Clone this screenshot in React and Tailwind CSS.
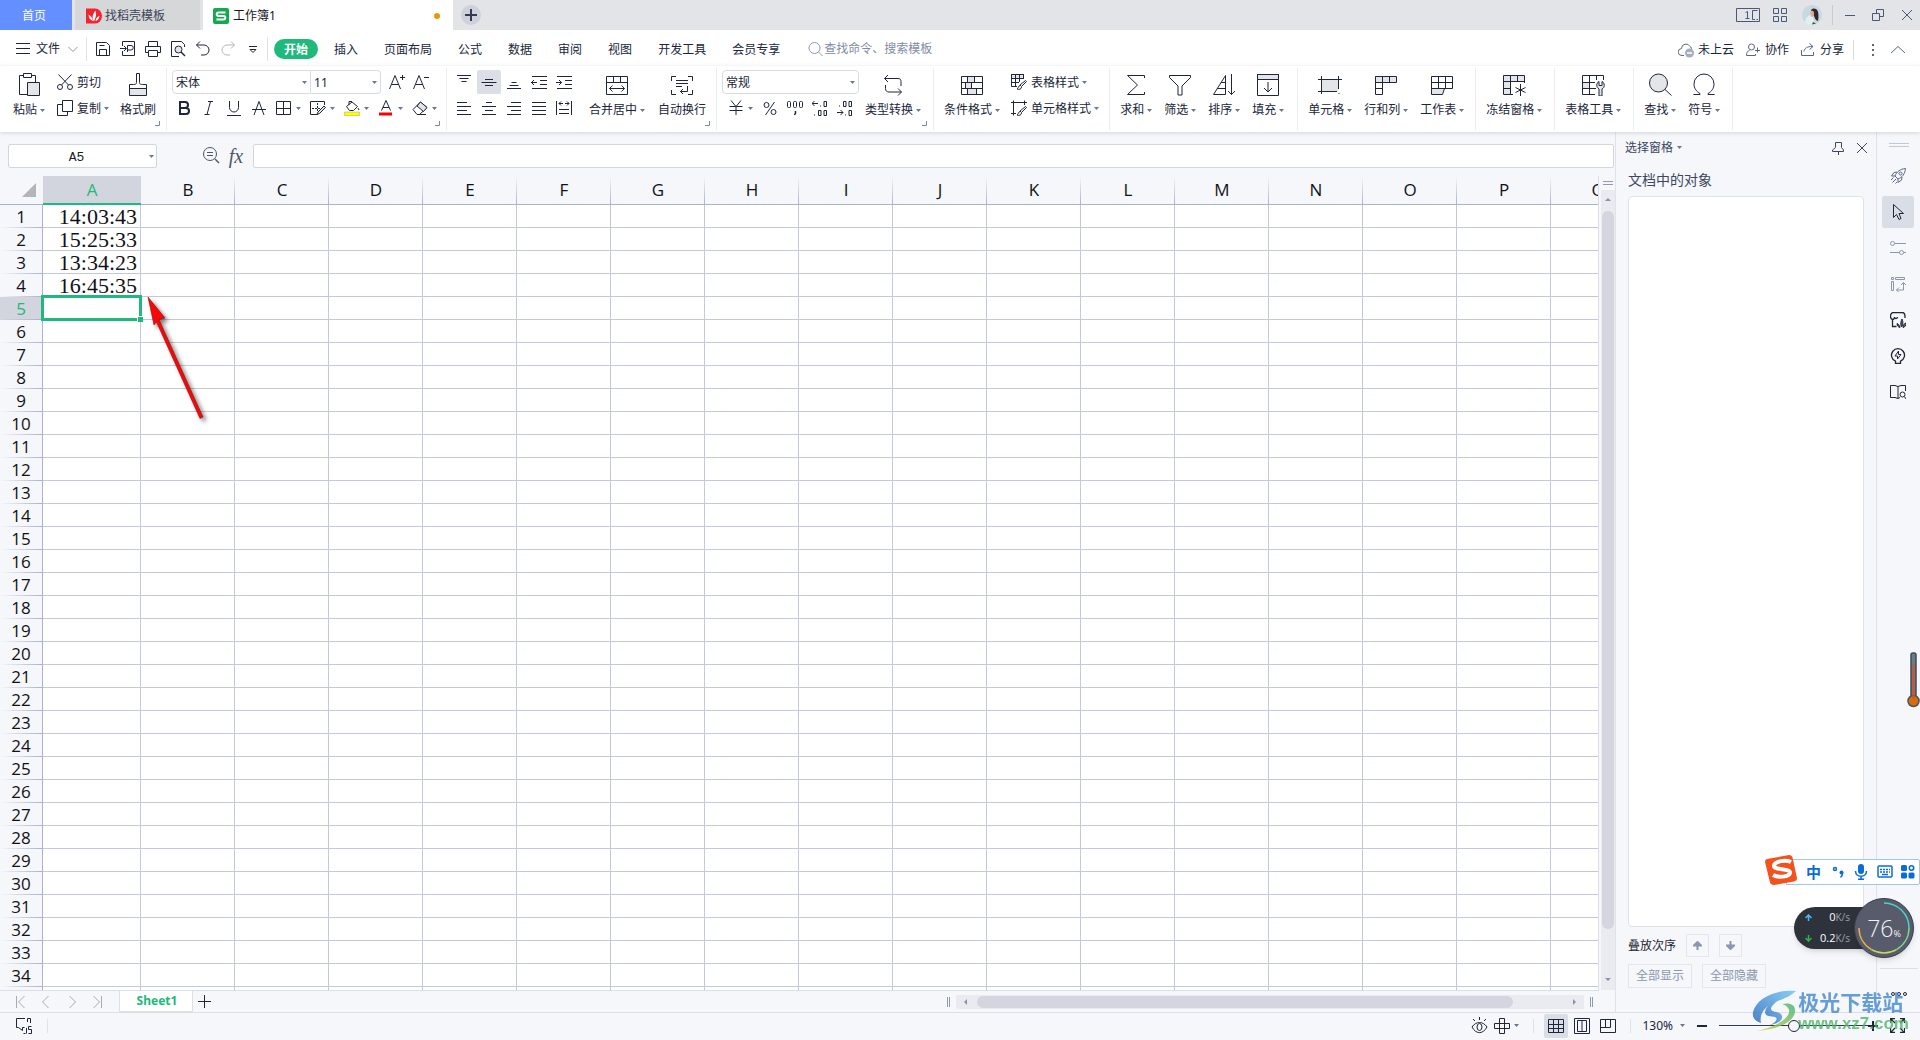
import React, { useState } from "react";

const COLUMNS = ["A", "B", "C", "D", "E", "F", "G", "H", "I", "J", "K", "L", "M", "N", "O", "P", "Q"];
const ROWS = Array.from({ length: 34 }, (_, i) => i + 1);
const TIMES = { 1: "14:03:43", 2: "15:25:33", 3: "13:34:23", 4: "16:45:35" };
const MENUS = ["开始", "插入", "页面布局", "公式", "数据", "审阅", "视图", "开发工具", "会员专享"];

const Icon = ({ size = 16, className = "", children }) => (
    <svg width={size} height={size} viewBox={`0 0 ${size} ${size}`} fill="none" stroke="currentColor" strokeWidth="1" className={`shrink-0 ${className}`} aria-hidden="true">
        {children}
    </svg>
);

const Caret = ({ className = "" }) => (
    <svg width="5" height="3" viewBox="0 0 5 3" className={`shrink-0 text-[#6b7690] ${className}`} aria-hidden="true">
        <path d="M0 0h5L2.5 3z" fill="currentColor" />
    </svg>
);

const Group = ({ className = "", launcher, children }) => (
    <div className={`relative my-0.5 flex items-start border-r border-[#ebedf0] pt-0.5 ${className}`}>
        {children}
        {launcher && (
            <svg width="5" height="5" viewBox="0 0 5 5" className="absolute bottom-1 right-1.5 text-[#7d889e]" aria-hidden="true">
                <path d="M4.5 0v4.5H0" fill="none" stroke="currentColor" />
            </svg>
        )}
    </div>
);

// large ribbon button: picture on top, caption below
const BigButton = ({ label, caret = true, children }) => (
    <button className="mt-0.5 flex shrink-0 flex-col items-center gap-1.5">
        <Icon size={24}>{children}</Icon>
        <span className="flex items-center gap-[3px] whitespace-nowrap leading-4">
            {label}
            {caret && <Caret />}
        </span>
    </button>
);

const RowButton = ({ label, caret, children }) => (
    <button className="flex h-6 items-center gap-1 whitespace-nowrap leading-4">
        <Icon>{children}</Icon>
        <span className="flex items-center gap-[3px] pt-px">
            {label}
            {caret && <Caret />}
        </span>
    </button>
);

const Tool = ({ title, active, children }) => (
    <button aria-label={title} className={`flex size-6 items-center justify-center rounded-xs ${active ? "bg-[#dce0e6]" : ""}`}>
        <Icon>{children}</Icon>
    </button>
);

const CaretTool = ({ title, children }) => (
    <button aria-label={title} className="flex h-6 items-center gap-1">
        <Icon>{children}</Icon>
        <Caret />
    </button>
);

const Select = ({ label, value, className }) => (
    <div className={`relative h-6 border border-[#d8dbe1] bg-white ${className}`}>
        <select aria-label={label} defaultValue={value} className="h-full w-full appearance-none pl-[3px] pr-4 pt-px leading-4 outline-none">
            <option>{value}</option>
        </select>
        <Caret className="pointer-events-none absolute right-[3px] top-[10px]" />
    </div>
);

const TitleBar = () => (
    <header className="flex h-[30px] shrink-0 items-center bg-[#e2e4e8] text-xs">
        <button className="h-full w-[72px] bg-[#648fff] pr-1 pt-px text-white">首页</button>
        <button className="ml-[3px] flex h-full w-[125px] items-center gap-[3px] bg-[#d6d7d9] pl-[11px] pt-px text-[#3c4354]">
            <Icon>
                <path d="M0 .5h9a7 7.500 0 0 1 0 15H0z" fill="#f5222f" stroke="none" />
                <path d="M8 13.500C5 9 7.500 5 9.500 2.500c1 3.500.5 7-1.500 11zM7 13C3.500 11.500 2.500 9 2.500 6.500 5 8 6.500 10 7 13zM9.500 13c.5-3 2-4.500 4-5-.3 2.500-1.500 4.300-4 5z" fill="#fff" stroke="none" />
            </Icon>
            找稻壳模板
        </button>
        <div className="ml-[3px] flex h-full w-[250px] items-center gap-1 bg-white pl-[10px] pt-px text-[#16181d]">
            <Icon>
                <rect width="16" height="16" rx="2" fill="#12aa4c" stroke="none" />
                <path d="M12.500 4.500h-7a1.700 1.700 0 0 0 0 3.500h5a1.700 1.700 0 0 1 0 3.500h-7" stroke="#fff" strokeWidth="2" />
            </Icon>
            <span className="flex-1">工作簿1</span>
            <span className="mr-[13px] size-1.5 rounded-full bg-[#e39a07]" />
        </div>
        <button aria-label="新建" className="ml-2 flex size-5 items-center justify-center rounded-full bg-[#ced1d9] text-[#333b50]">
            <Icon size={12}>
                <path d="M6 0v12M0 6h12" strokeWidth="2" />
            </Icon>
        </button>
        <div className="ml-auto flex items-center pr-2 text-[#4a5878]">
            <button aria-label="多窗口">
                <svg width="24" height="14" viewBox="0 0 24 14" fill="none" stroke="currentColor">
                    <path d="M.5.500h23v13H.500zM21.500 2.500h-5v9h2.500M20.500 11.500h1.500M9.500 4.500l2-1V10M9.500 10.500h4" />
                </svg>
            </button>
            <button aria-label="应用" className="ml-[13px]">
                <Icon size={14}>
                    <path d="M.5.500h5v5h-5zM8.500.500h5v5h-5zM.5 8.500h5v5h-5zM8.500 8.500h5v5h-5z" />
                </Icon>
            </button>
            <button aria-label="账号" className="ml-[15px]">
                <Icon size={20}>
                    <circle cx="10" cy="10" r="10" fill="#c6d9df" stroke="none" />
                    <path d="M3 17c1-5 3-7 7-7l3 9c-4 1.500-8 .5-10-2z" fill="#dff0f3" stroke="none" />
                    <path d="M9 5c1-1.500 3-2 5-1 2.500 1.500 2.500 5 2.500 8.500L16 16c-2-.5-3-2-3.500-4z" fill="#32262c" stroke="none" />
                    <path d="M8.500 6.500c1.500-1.500 3-1 3.500 1s-.5 4-1.500 4.500S8 10 8.500 6.500z" fill="#e2a898" stroke="none" />
                    <path d="M11 17l3 1.500-4 1z" fill="#4b4248" stroke="none" />
                </Icon>
            </button>
            <span className="ml-[10px] h-5 w-px bg-[#c6cad1]" />
            <button aria-label="最小化" className="ml-3">
                <Icon size={10}><path d="M0 5.500h10" /></Icon>
            </button>
            <button aria-label="还原" className="ml-[17px]">
                <Icon size={12}><path d="M.5 4.500h7v7h-7zM4.500 4.500v-4h7v7h-4" /></Icon>
            </button>
            <button aria-label="关闭" className="ml-[18px]">
                <Icon size={10}><path d="M0 0l10 10M10 0L0 10" /></Icon>
            </button>
        </div>
    </header>
);

const MenuBar = ({ menu, setMenu }) => (
    <div className="flex h-9 shrink-0 items-center bg-white pl-4 pt-0.5">
        <button className="flex items-center gap-1.5">
            <Icon size={14}><path d="M0 1.500h14M0 6.500h14M0 11.500h14" /></Icon>
            文件
            <Icon size={10} className="ml-0.5 text-[#8e97a8]"><path d="M.5 3L5 7.500 9.500 3" /></Icon>
        </button>
        <span className="ml-2 h-6 w-px bg-[#dfe1e6]" />
        <div className="flex items-center gap-[9px] pl-2">
            <button aria-label="保存">
                <Icon><path d="M1.500 1.500h10l3 3v10h-13zM4.500 14.500v-6h7v6M4.500 4.500h5" /></Icon>
            </button>
            <button aria-label="输出为PDF">
                <Icon><path d="M2.500 5V.500h12v14h-12V10M0 7.500h6M4 5l2.500 2.500L4 10M7.500 11V4.500H11a2 2 0 0 1 0 4.500H7.500" /></Icon>
            </button>
            <button aria-label="打印">
                <Icon><path d="M3.500 5V.500h9V5M3.500 11.500h-3V5.500h15v6h-3M3.500 9.500h9v6h-9z" /></Icon>
            </button>
            <button aria-label="打印预览">
                <Icon>
                    <path d="M14.500 6V3.500l-3-3h-10v15H9" />
                    <circle cx="8.500" cy="8.500" r="3.500" fill="#e4e5e8" />
                    <path d="M11 11l4 4" strokeWidth="1.500" />
                </Icon>
            </button>
            <button aria-label="撤销">
                <Icon><path d="M5 .500L1.500 4 5 7.500M1.500 4H9a5 5 0 0 1 0 10H6" /></Icon>
            </button>
            <button aria-label="恢复" className="text-[#b3b6bc]">
                <Icon><path d="M11 .500L14.500 4 11 7.500M14.500 4H7a5 5 0 0 0 0 10h3" /></Icon>
            </button>
            <button aria-label="自定义快速访问工具栏">
                <Icon><path d="M4 5.500h8M5 8.500l3 3 3-3z" /></Icon>
            </button>
        </div>
        <span className="ml-1.5 h-6 w-px bg-[#dfe1e6]" />
        <nav className="ml-1.5 flex gap-1.5">
            {MENUS.map((item) => (
                <button
                    key={item}
                    onClick={() => setMenu(item)}
                    className={`h-5 whitespace-nowrap rounded-full px-[10px] pt-px leading-5 ${menu === item ? "bg-[#20b97c] font-bold text-white" : ""}`}
                >
                    {item}
                </button>
            ))}
        </nav>
        <label className="ml-[18px] flex items-center text-[#8f9bb3]">
            <Icon>
                <circle cx="6.500" cy="7" r="5.500" />
                <path d="M10.500 11l4 4" />
            </Icon>
            <input aria-label="查找命令" placeholder="查找命令、搜索模板" className="w-32 outline-none placeholder:text-[#7f8ba5]" />
        </label>
        <div className="ml-auto flex items-center pt-px">
            <button className="flex items-center gap-1">
                <Icon className="text-[#5b6780]">
                    <path d="M6 13.500H4a3.500 3.500 0 0 1-.5-7A4.500 4.500 0 0 1 12 4.500c1 .5 1.500 1.500 1.500 2.500" />
                    <circle cx="11.500" cy="11" r="4.500" fill="#a5aebf" stroke="none" />
                    <path d="M9 11h5" stroke="#fff" strokeWidth="1.500" />
                </Icon>
                未上云
            </button>
            <button className="ml-3 flex items-center gap-[5px]">
                <Icon size={14} className="text-[#5b6780]">
                    <circle cx="5.500" cy="4" r="3" />
                    <path d="M3.500 7.500C1.500 8 .5 9.500.5 12.500h9V11M11.500 4.500v5M9 7.500h5" />
                </Icon>
                协作
            </button>
            <button className="ml-[11px] flex items-center gap-1">
                <Icon className="text-[#5b6780]">
                    <path d="M1.500 8v5.500h12V10M4 9.500C4.500 6 7 4.500 12.500 4.500M9.500 1.500l3.500 3-3.500 3" />
                </Icon>
                分享
            </button>
            <span className="ml-[9px] h-5 w-px bg-[#d9dce2]" />
            <button aria-label="更多" className="ml-[13px] text-[#5b6780]">
                <Icon size={12}><path d="M6 0v2M6 5v2M6 10v2" strokeWidth="2" /></Icon>
            </button>
            <button aria-label="折叠功能区" className="ml-[11px] mr-[14px] text-[#5b6780]">
                <Icon><path d="M1 11l7-6.500 7 6.500" /></Icon>
            </button>
        </div>
    </div>
);

const Ribbon = () => (
    <div className="relative z-10 flex h-[66px] shrink-0 bg-white shadow-[0_1px_4px_rgba(60,70,90,0.2)]">
        <Group launcher className="pl-[13px] pr-[10px]">
            <BigButton label="粘贴">
                <path d="M10 22.500H2.500v-19h4M14.500 3.500h4V10M6.500 1.500h8v4h-8z" />
                <path d="M10.500 10.500h12v13h-12z" fill="#e4e5e8" />
            </BigButton>
            <div className="ml-3 flex flex-col gap-0.5">
                <RowButton label="剪切">
                    <circle cx="3" cy="13" r="2.500" />
                    <circle cx="13" cy="13" r="2.500" />
                    <path d="M1.500 .500L11.500 11M14.500 .500L4.500 11" />
                </RowButton>
                <RowButton label="复制" caret>
                    <path d="M5.500 .500h10v11h-10zM5.500 4.500h-5v11h10v-4" />
                </RowButton>
            </div>
            <div className="ml-[11px]">
                <BigButton label="格式刷" caret={false}>
                    <path d="M3.500 16h17v7.500h-17z" fill="#e4e5e8" stroke="none" />
                    <path d="M10.500 1.500h3v9c0 1.500 1 2 3 2h4v11h-17v-11h4c2 0 3-.5 3-2zM3.500 16.500h17" />
                </BigButton>
            </div>
        </Group>

        <Group launcher className="pl-[5px] pr-[9px]">
            <div className="flex flex-col gap-0.5">
                <div className="flex">
                    <Select label="字体" value="宋体" className="w-[139px] rounded-l-sm" />
                    <Select label="字号" value="11" className="w-[70px] rounded-r-sm border-l-0" />
                    <div className="ml-1 flex">
                        <Tool title="增大字号"><path d="M.5 15L6 1.500 11.500 15M2.500 10.500h7M11 3.500h5M13.500 1v5" /></Tool>
                        <Tool title="减小字号"><path d="M.5 15L6 1.500 11.500 15M2.500 10.500h7M11 3.500h5" /></Tool>
                    </div>
                </div>
                <div className="flex">
                    <div className="flex gap-px">
                        <Tool title="加粗"><path d="M4 2h5a3 3 0 0 1 0 6H4zM4 8h6a3 3 0 0 1 0 6H4zM4 1v14" strokeWidth="2" /></Tool>
                        <Tool title="倾斜"><path d="M7 1.500h5M3.500 14.500h5M9.500 1.500l-3.500 13" /></Tool>
                        <Tool title="下划线"><path d="M3.500 1v6.500a4.500 4.500 0 0 0 9 0V1M1 15.500h14" /></Tool>
                        <Tool title="删除线"><path d="M3 15L8 1.500 13 15M1 9.500h14" /></Tool>
                    </div>
                    <div className="ml-[5px] flex gap-[9px]">
                        <CaretTool title="边框"><path d="M.5 1.500h14v13h-14zM7.500 1.500v13M.5 8.500h14" /></CaretTool>
                        <CaretTool title="绘图边框">
                            <path d="M14.500 5V1.500h-14v13H7" />
                            <path d="M7.500 3v9M2 8.500h9" strokeDasharray="2 1" />
                            <path d="M14 6l1.500 1.500-6 6-2.500 1 1-2.500z" fill="#e4e5e8" />
                        </CaretTool>
                        <CaretTool title="填充颜色">
                            <path d="M2.500 6.500L8 2l5.500 4.500L9.500 10.500h-4zM5 5V1.500h3M14 8l1 2" />
                            <path d="M.5 12h15v3.500H.500z" fill="#ffff00" stroke="#a8a850" strokeWidth=".5" />
                        </CaretTool>
                        <CaretTool title="字体颜色">
                            <path d="M3.500 10.500L8 .500l4.500 10M5 7.500h6" />
                            <path d="M1 12.500h13v3H1z" fill="#ff0000" stroke="none" />
                        </CaretTool>
                        <CaretTool title="清除">
                            <path d="M1 9.500L8.500 2l6.500 5.500-7.500 7H5z" />
                            <path d="M5 6l6.500 5.500L15 7.500 8.500 2z" fill="#e4e5e8" />
                            <path d="M5 14.500h9" />
                        </CaretTool>
                    </div>
                </div>
            </div>
        </Group>

        <Group launcher className="gap-[13px] pl-[5px] pr-[10px]">
            <div className="grid grid-cols-5 gap-x-px gap-y-0.5">
                <Tool title="顶端对齐"><path d="M1 1.500h14M3.500 4.500h9M5.500 7.500h5" /></Tool>
                <Tool title="垂直居中" active><path d="M4 5.500h8M.5 8.500h15M4 11.500h8" /></Tool>
                <Tool title="底端对齐"><path d="M5.500 8.500h5M3.500 11.500h9M1 14.500h14" /></Tool>
                <Tool title="减少缩进量"><path d="M1 2.500h15M9 6.500h7M9 10.500h7M1 14.500h15M0 8.500h6M3 6L.500 8.500 3 11" /></Tool>
                <Tool title="增加缩进量"><path d="M1 2.500h15M9 6.500h7M9 10.500h7M1 14.500h15M0 8.500h6M3 6l2.500 2.500L3 11" /></Tool>
                <Tool title="左对齐"><path d="M1 2.500h10M1 6.500h14M1 10.500h10M1 14.500h14" /></Tool>
                <Tool title="居中"><path d="M5 2.500h6M1 6.500h14M4 10.500h8M1 14.500h14" /></Tool>
                <Tool title="右对齐"><path d="M5 2.500h10M1 6.500h14M5 10.500h10M1 14.500h14" /></Tool>
                <Tool title="两端对齐"><path d="M1 2.500h14M1 6.500h14M1 10.500h14M1 14.500h14" /></Tool>
                <Tool title="分散对齐"><path d="M.5 1v14M15.500 1v14M3 3.500h4M9 3.500h4M5 1.500l-2 2 2 2M11 1.500l2 2-2 2M3 9.500h10M3 13.500h10" /></Tool>
            </div>
            <BigButton label="合并居中">
                <path d="M1.500 4.500h21v18h-21zM1.500 10.500h21M8.500 4.500v6M15.500 4.500v6M4.500 16.500h15M7.500 13.500l-3 3 3 3M16.500 13.500l3 3-3 3" />
            </BigButton>
            <BigButton label="自动换行" caret={false}>
                <path d="M1.500 9V4.500H6M18 4.500h4.500V9M22.500 18v4.500H18M6 22.500H1.500V18M6 8.500h12M6 11.500h12M6 14.500h6M17.500 14v5.500h-7M13 17l-2.500 2.500L13 22" />
            </BigButton>
        </Group>

        <Group launcher className="pl-[5px] pr-3">
            <div className="flex flex-col gap-0.5">
                <Select label="数字格式" value="常规" className="w-[137px] rounded-sm" />
                <div className="flex gap-[9px] pl-1.5">
                    <CaretTool title="货币"><path d="M3 .500l5 6 5-6M8 6.500V15M1.500 6.500h13M1.500 10.500h13" /></CaretTool>
                    <button aria-label="百分比" className="flex h-6 items-center">
                        <Icon>
                            <circle cx="4.500" cy="5" r="2.500" />
                            <circle cx="11.500" cy="12" r="2.500" />
                            <path d="M12.500 2l-9 13" />
                        </Icon>
                    </button>
                    <button aria-label="千位分隔" className="flex h-6 items-center">
                        <Icon>
                            <rect x=".5" y="1.500" width="3" height="6" rx="1" />
                            <rect x="6.500" y="1.500" width="3" height="6" rx="1" />
                            <rect x="12.500" y="1.500" width="3" height="6" rx="1" />
                            <path d="M8.500 11v2l-1 2" strokeWidth="1.500" />
                        </Icon>
                    </button>
                    <button aria-label="增加小数位" className="flex h-6 items-center">
                        <Icon>
                            <path d="M0 3.500h6M2.500 1L0 3.500 2.500 6M8.500 5.500v1M12 1.500h2.500v5H12zM2.500 14.500v1M6.500 10.500H9v5H6.500zM12 10.500h2.500v5H12z" />
                        </Icon>
                    </button>
                    <button aria-label="减少小数位" className="flex h-6 items-center">
                        <Icon>
                            <path d="M2.500 5.500v1M6.500 1.500H9v5H6.500zM12 1.500h2.500v5H12zM0 12.500h6M3.500 10L6 12.500 3.500 15M8.500 14.500v1M12 10.500h2.500v5H12z" />
                        </Icon>
                    </button>
                </div>
            </div>
            <div className="ml-1.5">
                <BigButton label="类型转换">
                    <path d="M7 3L3.500 6.500 7 10M3.500 6.500H17c2 0 3 1 3 3V14M17 16.500l3.500 3.500-3.500 3.500M20.500 20H8c-2 0-3.500-1-3.500-3.500V13" />
                </BigButton>
            </div>
        </Group>

        <Group className="gap-[11px] px-[10px]">
            <BigButton label="条件格式">
                <path d="M7.500 4.500v6h7v-6zM5.500 10.500h6v6h-6zM7.500 16.500h9v6h-9z" fill="#e4e5e8" stroke="none" />
                <path d="M1.500 4.500h21v18h-21zM1.500 10.500h21M1.500 16.500h21M7.500 4.500v6M14.500 4.500v6M5.500 10.500v6M11.500 10.500v6M7.500 16.500v6M16.500 16.500v6" />
            </BigButton>
            <div className="flex flex-col gap-0.5">
                <RowButton label="表格样式" caret>
                    <path d="M.5.500h12v4H.500z" fill="#e4e5e8" />
                    <path d="M6 12.500H.500V.500h12V5M.5 8.500H8M4.500.500v12M8.500.500V8M14.500 6.500l1 1-5 5-1.500-1.500zM9 11.500c-2 .5-1.500 3-3 3.500 2 1 4.500 0 4.500-2" />
                </RowButton>
                <RowButton label="单元格样式" caret>
                    <path d="M2.500.500v15M0 2.500h16M0 13.500h5M13.500.500V5M14.500 6.500l1 1-5 5-1.500-1.500zM9 11.500c-2 .5-1.500 3-3 3.500 2 1 4.500 0 4.500-2" />
                </RowButton>
            </div>
        </Group>

        <Group className="gap-3 pl-[10px] pr-[13px]">
            <BigButton label="求和">
                <path d="M20.500 6V3.500h-17l10 9.500-10 9.500h17V20" />
            </BigButton>
            <BigButton label="筛选">
                <path d="M1.500 3.500h21v2l-8.500 8.500v9h-4v-9L1.500 5.500z" />
            </BigButton>
            <BigButton label="排序">
                <path d="M1.500 22.500L13.500 3.500v19zM9 10.500h4.500M5 16.500h8.500M19.500 2v20.500M16 19l3.500 3.500L23 19" />
            </BigButton>
            <BigButton label="填充">
                <path d="M1.500 2.500h21v5h-21z" fill="#e4e5e8" />
                <path d="M1.500 2.500h21v21h-21zM12 10v10M8 16l4 4 4-4" />
            </BigButton>
        </Group>

        <Group className="gap-3 pl-[10px] pr-[11px]">
            <BigButton label="单元格">
                <path d="M3.500 7.500h17v12h-17z" fill="#e4e5e8" stroke="none" />
                <path d="M3.500 4v18M20.500 4v13M0 7.500h24M0 19.500h19M21 21v1" />
            </BigButton>
            <BigButton label="行和列">
                <path d="M1.500 4.500h21v6h-21z" fill="#e4e5e8" />
                <path d="M8.500 4.500v18h-7v-18M15.500 4.500v6M1.500 16.500h7" />
            </BigButton>
            <BigButton label="工作表">
                <path d="M1.500 16.500h13l-2 6h-11z" fill="#e4e5e8" />
                <path d="M1.500 4.500h21v12h-21zM1.500 10.500h21M8.500 4.500v12M15.500 4.500v12" />
            </BigButton>
        </Group>

        <Group className="pl-[10px] pr-3">
            <BigButton label="冻结窗格">
                <path d="M1.500 3.500h21v6h-14v13h-7z" fill="#e4e5e8" stroke="none" />
                <path d="M11 22.500H1.500v-19h21V11M1.500 9.500h21M8.500 3.500v19M15.500 3.500v6M1.500 16.500h7M18.500 12v12M13.500 15.500l10 5M23.500 15.500l-10 5" />
            </BigButton>
        </Group>

        <Group className="pl-[10px] pr-3">
            <BigButton label="表格工具">
                <path d="M1.500 10.500h7v6h-7z" fill="#e4e5e8" />
                <path d="M14 22.500H1.500v-19h21V8M1.500 10.500H14M1.500 16.500H15M8.500 3.500v19M15.500 3.500V8" />
                <path d="M18 24v-7c-3-1.500-3-6 0-7.500v4h3v-4c3 1.500 3 6 0 7.500v7z" fill="#e4e5e8" />
            </BigButton>
        </Group>

        <Group className="gap-3 pl-[10px] pr-3">
            <BigButton label="查找">
                <circle cx="10.500" cy="11" r="9" fill="#e4e5e8" />
                <path d="M17 17.500l6.500 6" />
            </BigButton>
            <BigButton label="符号">
                <path d="M1.500 22.500H8v-1C4.500 19.500 2 16.500 2 12a10 10 0 0 1 20 0c0 4.500-2.500 7.500-6 9.500v1h6.500" />
            </BigButton>
        </Group>
    </div>
);

const FormulaBar = () => (
    <div className="flex h-11 shrink-0 items-start pl-2 pr-px pt-3">
        <div className="relative h-6 w-[149px] rounded-xs border border-[#d3d6dd] bg-white">
            <input aria-label="名称框" defaultValue="A5" className="h-full w-full pr-3 pt-0.5 text-center font-['Liberation_Mono',monospace] text-[13px] text-[#1c1e24] outline-none" />
            <Caret className="absolute right-0.5 top-[10px]" />
        </div>
        <button aria-label="搜索" className="ml-[45px] mt-[3px] text-[#4d566b]">
            <Icon size={18}>
                <circle cx="8" cy="7" r="6.500" />
                <path d="M5 5.500h6M5 8.500h6" />
                <path d="M13 12l4 4" strokeWidth="1.500" />
            </Icon>
        </button>
        <button className="ml-1.5 w-5 font-['Liberation_Serif',serif] text-xl italic leading-6 text-[#4d566b]">fx</button>
        <input aria-label="编辑栏" className="ml-[7px] h-6 min-w-0 flex-1 rounded-xs border border-[#d3d6dd] bg-white px-2 outline-none" />
    </div>
);

const Sheet = () => (
    <div className="min-h-0 min-w-0 flex-1 overflow-hidden border-r border-[#dcdfe7]">
        <table className="w-[1645px] table-fixed border-separate border-spacing-0 bg-white font-['Open_Sans',sans-serif] text-[17px] text-[#111217]">
            <colgroup>
                <col className="w-[43px]" />
                <col className="w-[98px]" />
                {COLUMNS.slice(1).map((c) => (
                    <col key={c} className="w-[94px]" />
                ))}
            </colgroup>
            <thead>
                <tr className="h-[29px]">
                    <td className="border-b border-[#a9b3cd] bg-[#f5f7fa] p-0">
                        <svg width="14" height="14" viewBox="0 0 14 14" className="ml-[22px]" aria-hidden="true">
                            <path d="M14 0v14H0z" fill="#b4b5b8" />
                        </svg>
                    </td>
                    {COLUMNS.map((c) =>
                        c === "A" ? (
                            <th key={c} scope="col" className="border-b-2 border-[#20b97c] bg-[#d2d5dd] p-0 font-normal leading-6 text-[#20b97c]">{c}</th>
                        ) : (
                            <th key={c} scope="col" className="border-b border-[#a9b3cd] bg-[#f5f7fa] bg-linear-to-b from-transparent to-[#a9b3cd] bg-[length:1px_100%] bg-right bg-no-repeat p-0 font-normal leading-6">{c}</th>
                        )
                    )}
                </tr>
            </thead>
            <tbody>
                {ROWS.map((r) => (
                    <tr key={r} className="h-[23px]">
                        <th
                            scope="row"
                            className={`border-r border-[#a9b3cd] bg-linear-to-r from-transparent to-[#a9b3cd] bg-[length:100%_1px] bg-bottom bg-no-repeat p-0 font-normal leading-[22px] ${r === 5 ? "bg-[#d2d5dd] text-[#20b97c]" : "bg-[#f5f7fa]"}`}
                        >
                            {r}
                        </th>
                        {COLUMNS.map((c) => (
                            <td key={c} className="relative border-b border-r border-[#c3c9db] p-0 pr-[3px] pt-px text-right font-['Liberation_Serif',serif] text-[22px] leading-[21px]">
                                {c === "A" && TIMES[r]}
                                {c === "A" && r === 5 && (
                                    <span className="absolute -inset-0.5 z-10 border-[3px] border-[#20b97c]">
                                        <span className="absolute -bottom-1 -right-1 size-1.5 border-l border-t border-white bg-[#20b97c]" />
                                    </span>
                                )}
                            </td>
                        ))}
                    </tr>
                ))}
                {/* blank sliver of the next row */}
                <tr className="h-[23px]">
                    <td className="border-r border-[#a9b3cd] bg-[#f5f7fa] p-0" />
                    {COLUMNS.map((c) => (
                        <td key={c} className="border-b border-r border-[#c3c9db] p-0" />
                    ))}
                </tr>
            </tbody>
        </table>
    </div>
);

const VerticalScroll = () => (
    <div className="flex w-4 shrink-0 flex-col items-end">
        <div className="flex h-[14px] w-[14px] flex-col items-center gap-0.5 pt-[5px]">
            <span className="h-px w-[10px] bg-[#8e99ae]" />
            <span className="h-px w-[10px] bg-[#8e99ae]" />
        </div>
        <div className="flex w-[14px] flex-1 flex-col items-center bg-[#e9ebf0] text-[#8793ad]">
            <button aria-label="向上滚动" className="flex h-[21px] shrink-0 items-center pb-0.5">
                <svg width="6" height="3" viewBox="0 0 6 3"><path d="M0 3h6L3 0z" fill="currentColor" /></svg>
            </button>
            <div className="w-3 flex-1 rounded-full bg-[#d3d6de]" />
            <div className="flex h-[61px] shrink-0 items-end">
                <button aria-label="向下滚动" className="flex h-[21px] items-center">
                    <svg width="6" height="3" viewBox="0 0 6 3"><path d="M0 0h6L3 3z" fill="currentColor" /></svg>
                </button>
            </div>
        </div>
    </div>
);

const SheetTabs = () => (
    <div className="flex h-[22px] shrink-0 items-start">
        <div className="flex h-full flex-1 items-start border-t border-[#dcdfe7]">
            <div className="flex h-[21px] w-[119px] items-center gap-[14px] pl-[14px] text-[#a9abb0]">
                <button aria-label="第一个"><Icon size={12}><path d="M2.500 0v12M10.500 0l-6 6 6 6" /></Icon></button>
                <button aria-label="上一个"><Icon size={12}><path d="M8.500 0l-6 6 6 6" /></Icon></button>
                <button aria-label="下一个"><Icon size={12}><path d="M3.500 0l6 6-6 6" /></Icon></button>
                <button aria-label="最后一个"><Icon size={12}><path d="M1.500 0l6 6-6 6M9.500 0v12" /></Icon></button>
            </div>
            <button className="h-[21px] w-[74px] border-x border-b border-[#dcdfe7] bg-white pl-0.5 font-['Noto_Sans',sans-serif] text-xs font-bold text-[#20b97c]">Sheet1</button>
            <button aria-label="新建工作表" className="ml-[5px] flex h-[21px] items-center">
                <Icon size={13}><path d="M6.500 0v13M0 6.500h13" /></Icon>
            </button>
            <div className="ml-auto flex h-[21px] w-[652px] items-center pr-1.5">
                <span className="h-[10px] w-[3px] border-x border-[#8e99ae]" />
                <div className="mx-1.5 flex h-[14px] flex-1 items-center bg-[#e9ebf0] text-[#8793ad]">
                    <button aria-label="向左滚动" className="w-[21px] pl-2">
                        <svg width="3" height="6" viewBox="0 0 3 6"><path d="M3 0v6L0 3z" fill="currentColor" /></svg>
                    </button>
                    <div className="h-3 flex-1 rounded-full bg-[#d3d6de]" />
                    <button aria-label="向右滚动" className="flex w-[71px] justify-end pr-2">
                        <svg width="3" height="6" viewBox="0 0 3 6"><path d="M0 0v6l3-3z" fill="currentColor" /></svg>
                    </button>
                </div>
                <span className="h-[10px] w-[3px] border-x border-[#8e99ae]" />
            </div>
        </div>
        <span className="w-4" />
    </div>
);

const SelectionPane = () => (
    <aside className="flex w-[261px] shrink-0 flex-col border-l border-[#dfe2e9] pb-6 text-[#3c4660]">
        <div className="flex h-[30px] items-center pl-[9px] pt-px">
            <button className="flex items-center gap-1">
                选择窗格
                <Caret />
            </button>
            <button aria-label="固定" className="ml-auto">
                <Icon size={14}><path d="M4.500 1.500h6v5l2 2.500v1.500h-11V9l3-2.500zM7.500 10.500V14" /></Icon>
            </button>
            <button aria-label="关闭窗格" className="ml-3 mr-[9px]">
                <Icon size={10}><path d="M0 0l10 10M10 0L0 10" /></Icon>
            </button>
        </div>
        <h2 className="pb-1.5 pl-3 pt-2 text-sm leading-5">文档中的对象</h2>
        <div className="mx-3 flex-1 rounded-sm border border-[#dfe2e9] bg-white" />
        <div className="mt-[7px] flex h-[23px] items-center pl-3 text-[#1f2533]">
            叠放次序
            <button aria-label="上移一层" className="ml-[10px] flex size-[23px] items-center justify-center border border-[#e4e6ec] text-[#8c97ad]">
                <Icon size={9}><path d="M4.500 9V2M1 4.500l3.500-3.500L8 4.500z" fill="currentColor" strokeWidth="2" /></Icon>
            </button>
            <button aria-label="下移一层" className="ml-[10px] flex size-[23px] items-center justify-center border border-[#e4e6ec] text-[#8c97ad]">
                <Icon size={9}><path d="M4.500 0v7M1 4.500L4.500 8 8 4.500z" fill="currentColor" strokeWidth="2" /></Icon>
            </button>
        </div>
        <div className="mt-[7px] flex gap-[10px] pl-3 text-[#8c97ad]">
            <button className="h-6 w-16 border border-[#e4e6ec]">全部显示</button>
            <button className="h-6 w-16 border border-[#e4e6ec]">全部隐藏</button>
        </div>
    </aside>
);

const SideTool = ({ title, className = "", children }) => (
    <button aria-label={title} className={`flex size-8 items-center justify-center rounded-xs ${className}`}>
        <Icon>{children}</Icon>
    </button>
);

const SideBar = () => (
    <nav className="flex w-11 shrink-0 flex-col items-center border-l border-[#dfe2e9] pt-[11px]">
        <span className="h-1 w-5 border-y border-[#c3c7cf]" />
        <div className="mt-[13px] flex flex-1 flex-col gap-1 pr-px">
            <SideTool title="启动" className="text-[#5b6885]">
                <path d="M5 8c1.500-4 5-7 10.500-7.500C15 6 12 9.500 8 11zM5 8H1.500L4 4.500l3-.5M8 11v3.500l3.500-2.500.5-3M1 12l2.500-2.500M2.500 14.500L6 11M5.500 15.500L7 14" />
                <circle cx="10.500" cy="5.500" r="1.500" />
            </SideTool>
            <SideTool title="选择" className="bg-[#d8dde6] text-[#20263a]">
                <path d="M3.500.500v13l3-3 2.500 5 2-1-2-5h4.500z" />
            </SideTool>
            <SideTool title="属性" className="text-[#8c97ad]">
                <circle cx="2.500" cy="3.500" r="2" />
                <circle cx="11.500" cy="12.500" r="2" />
                <path d="M4.500 3.500H16M0 12.500h9.500M13.500 12.500H16" />
            </SideTool>
            <SideTool title="透视表" className="text-[#8c97ad]">
                <path d="M1.500 1.500h2v2h-2zM5.500 1.500h9v2h-9zM1.500 5.500h2v9h-2zM13.500 7v7h-7M11 9l2.500-2.500L16 9M9 11.500L6.500 14 9 16.500" />
            </SideTool>
            <SideTool title="稻壳" className="text-[#20263a]">
                <path d="M2.500 7.500v7h4M2.500 7.500C.5 7 .5 6 .5 4.500c0-2.500 1-4 3-4h8.500c2 0 3 1.500 3 4V6M2.500 7.500c1 0 2-.5 2-2.500 0 2 3 2 3 0" strokeWidth="1.300" />
                <path d="M11.500 15c-1.500-3-.5-6 .5-8 1 2 1.500 5-.5 8zM10 15.500c-2-.5-3-2-3-4 1.500.5 2.500 2 3 4zM13 15.500c0-2.500 1-4 3-4.500 0 2.500-1 4-3 4.500z" fill="#5b6272" />
            </SideTool>
            <SideTool title="灵感" className="text-[#20263a]">
                <path d="M5.500 13.200a6.500 6.500 0 1 1 5 0v2.300h-5z" strokeWidth="1.300" />
                <path d="M8.500 3L5 8h2.500v3L11 6.500H8.500z" />
            </SideTool>
            <SideTool title="帮助" className="text-[#20263a]">
                <path d="M8 2.500l-3-1H.500v12H5l3 1 2-1M8 2.500v12M8 2.500l3-1h4.500V7" />
                <circle cx="12.500" cy="10.500" r="2.500" />
                <path d="M14.500 12.500L16 15" />
            </SideTool>
        </div>
        <div className="flex h-11 w-[38px] justify-center border-t border-[#dcdfe7] pt-[23px] text-[#20263a]">
            <button aria-label="更多工具" className="h-1">
                <svg width="16" height="4" viewBox="0 0 16 4" fill="none" stroke="currentColor" className="block">
                    <circle cx="2" cy="2" r="1.500" />
                    <circle cx="8" cy="2" r="1.500" />
                    <circle cx="14" cy="2" r="1.500" />
                </svg>
            </button>
        </div>
    </nav>
);

const StatusBar = () => {
    const [zoom, setZoom] = useState(50);

    return (
        <footer className="flex h-7 shrink-0 items-center border-t border-[#dcdfe7] pb-0.5 pr-[15px] font-['Noto_Sans',sans-serif]">
            <button aria-label="宏" className="ml-4">
                <Icon>
                    <path d="M9 .500H.500v9h2l4 3v-3h2M11.500 4V.500h3V5M9.500 15.500h-2M10.500 10v5.500M15.500 8.500h-3v3h3v4h-3" />
                </Icon>
            </button>
            <span className="ml-[15px] h-[14px] w-px bg-[#dfe2e9]" />
            <div className="ml-auto flex items-center">
                <button aria-label="护眼模式">
                    <Icon size={17}>
                        <path d="M1 10c4-6 11-6 15 0-4 7.500-11 7.500-15 0zM8.500 0v3M2 2l2 2M15 2l-2 2" />
                        <ellipse cx="8.500" cy="10" rx="2.500" ry="3.500" />
                    </Icon>
                </button>
                <button aria-label="阅读模式" className="ml-1.5 flex items-center gap-1">
                    <Icon><path d="M5.500 .500h5v15h-5zM.500 5.500h15v5H.500zM5.500 5.500h5v5h-5z" /></Icon>
                    <Caret />
                </button>
                <span className="ml-[14px] h-[14px] w-px bg-[#dfe2e9]" />
                <button aria-label="普通视图" className="ml-[10px] flex size-6 items-center justify-center rounded-xs bg-[#d8dde6]">
                    <Icon><path d="M.500 1.500h15v13H.500zM5.500 1.500v13M10.500 1.500v13M.500 6.500h15M.500 10.500h15" /></Icon>
                </button>
                <button aria-label="页面布局" className="ml-1.5">
                    <Icon><path d="M.500 .500h15v15H.500zM3.500 2.500h9v11h-9zM8 2.500v11" /></Icon>
                </button>
                <button aria-label="分页预览" className="ml-[10px]">
                    <Icon><path d="M.500 1.500h15v13H.500zM.500 9.500h10v-8M5.500 1.500v8" /></Icon>
                </button>
                <span className="ml-[14px] h-[14px] w-px bg-[#dfe2e9]" />
                <button className="ml-[11px] flex items-center gap-[7px]">
                    130%
                    <Caret />
                </button>
                <button aria-label="缩小" className="ml-3">
                    <Icon size={10}><path d="M0 5h10" strokeWidth="2" /></Icon>
                </button>
                <input
                    type="range"
                    aria-label="缩放比例"
                    value={zoom}
                    onChange={(e) => setZoom(Number(e.target.value))}
                    className="ml-3 h-3 w-[149px] appearance-none bg-transparent [&::-webkit-slider-runnable-track]:h-px [&::-webkit-slider-runnable-track]:bg-[#333b50] [&::-webkit-slider-thumb]:-mt-[5px] [&::-webkit-slider-thumb]:size-3 [&::-webkit-slider-thumb]:appearance-none [&::-webkit-slider-thumb]:rounded-full [&::-webkit-slider-thumb]:border [&::-webkit-slider-thumb]:border-[#20263a] [&::-webkit-slider-thumb]:bg-[#f5f7fa]"
                />
                <button aria-label="放大">
                    <Icon size={10}><path d="M0 5h10M5 0v10" strokeWidth="2" /></Icon>
                </button>
                <button aria-label="全屏" className="ml-3">
                    <Icon size={15}><path d="M.500 5V.500H5M10 .500h4.500V5M14.500 10v4.500H10M5 14.500H.500V10M.500.500L5 5M14.500.500L10 5M14.500 14.500L10 10M.500 14.500L5 10" strokeWidth="1.300" /></Icon>
                </button>
            </div>
        </footer>
    );
};

const RedArrow = () => (
    <svg width="70" height="136" viewBox="0 0 70 136" className="absolute left-[142px] top-[291px] z-20 drop-shadow-[3px_3px_2px_rgba(0,0,0,0.5)]" aria-hidden="true">
        <path d="M6 6l17 21-6 1.500L61 126l-3 1.500L14.500 31 12 34z" fill="#fb0606" stroke="#7c1414" strokeWidth=".6" />
    </svg>
);

const Thermometer = () => (
    <svg width="13" height="56" viewBox="0 0 13 56" className="absolute right-0 top-[652px] z-20" aria-hidden="true">
        <rect x="4" y="1" width="5" height="48" rx="2" fill="#6e7a86" stroke="#3f4d59" strokeWidth="1.500" />
        <circle cx="6.500" cy="49" r="5.500" fill="#da6c0a" stroke="#46545f" strokeWidth="1.500" />
        <path d="M6.500 13v34" stroke="#dd4e22" strokeWidth="2" />
    </svg>
);

const InputMethodBar = () => (
    <div className="absolute bottom-[155px] right-0 z-20 flex h-[26px] items-center">
        <svg width="34" height="32" viewBox="0 0 34 32" className="relative z-10 -mr-3 -mt-1" aria-hidden="true">
            <path d="M3 5L25 1c2 0 3 1 3.500 2.500L33 24c0 2-1 3-3 3.500L10 31c-2 0-3.500-1-4-2.500L1 8c0-1.500.5-2.500 2-3z" fill="#f4511c" />
            <path d="M27 8c-5-2.500-16-1-17 3.500-1 5 17 2.500 16 7.500-1 4-12 5-17 2" fill="none" stroke="#fff" strokeWidth="4" />
        </svg>
        <div className="flex h-[26px] w-[134px] items-center justify-end gap-2 rounded-r-xs border border-[#a6c4e8] bg-white pr-1 text-[#0a6cd6]">
            <button className="text-[15px] font-bold leading-6">中</button>
            <button aria-label="标点" className="ml-0.5">
                <Icon size={14}>
                    <circle cx="4" cy="4" r="1.500" strokeWidth="1.500" />
                    <circle cx="10.500" cy="7.500" r="2" fill="currentColor" stroke="none" />
                    <path d="M11.500 8c0 2-.5 3.500-2 4.500" strokeWidth="1.500" />
                </Icon>
            </button>
            <button aria-label="语音">
                <Icon>
                    <rect x="5" y="0" width="6" height="10" rx="3" fill="currentColor" stroke="none" />
                    <path d="M2.500 7c0 7 11 7 11 0M8 12v3M5 15.200h6" strokeWidth="1.500" />
                </Icon>
            </button>
            <button aria-label="软键盘">
                <Icon>
                    <rect x="1" y="2" width="14" height="11" rx="1" strokeWidth="1.500" />
                    <path d="M3 5.500h10M3 8h10" strokeWidth="1.500" strokeDasharray="2 1" />
                    <path d="M5 10.500h6" strokeWidth="1.500" />
                </Icon>
            </button>
            <button aria-label="工具箱">
                <Icon size={14}>
                    <rect x="0" y="0" width="6" height="6" rx="1.500" fill="currentColor" stroke="none" />
                    <circle cx="10.500" cy="3" r="2.200" strokeWidth="1.600" />
                    <rect x="0" y="7.500" width="6" height="6" rx="1.500" fill="currentColor" stroke="none" />
                    <rect x="7.500" y="7.500" width="6" height="6" rx="1.500" fill="currentColor" stroke="none" />
                </Icon>
            </button>
        </div>
    </div>
);

const NetSpeed = () => (
    <div className="absolute bottom-[82px] right-1.5 z-20 flex items-center font-['Open_Sans',sans-serif]">
        <div className="-mr-4 flex h-[42px] w-[76px] flex-col justify-center rounded-l-full bg-[#2e323b] pr-5 text-white shadow-md">
            <div className="flex h-[21px] items-center justify-end text-[11px]">
                <Icon size={7} className="mr-auto ml-[11px] text-[#4fb7f5]"><path d="M3.500 7V1M.5 4l3-3 3 3" strokeWidth="1.500" /></Icon>
                0<span className="text-[10px] text-[#9da1aa]">K/s</span>
            </div>
            <div className="flex h-[21px] items-center justify-end text-[11px]">
                <Icon size={7} className="mr-auto ml-[11px] text-[#32b44a]"><path d="M3.500 0v6M.5 3l3 3 3-3" strokeWidth="1.500" /></Icon>
                0.2<span className="text-[10px] text-[#9da1aa]">K/s</span>
            </div>
        </div>
        <div className="relative flex size-[60px] items-center justify-center rounded-full border border-[#3b3e49] bg-[#575b6b] text-[#f2f3f5] shadow-md">
            <svg width="58" height="58" viewBox="0 0 58 58" fill="none" strokeWidth="1.500" className="absolute inset-0" aria-hidden="true">
                <path d="M29 4a25 25 0 0 1 25 25" stroke="#45d6c4" />
                <path d="M54 29a25 25 0 0 1-12.500 21.600" stroke="#7bd98a" />
                <path d="M41.500 50.600A25 25 0 0 1 16.500 50.600" stroke="#c7dc57" />
                <path d="M16.500 50.600A25 25 0 0 1 4 29" stroke="#efb04e" />
            </svg>
            <span className="text-[23px] font-light leading-7">76</span>
            <span className="mt-3 text-[9px] leading-3">%</span>
        </div>
    </div>
);

const SiteMark = () => (
    <div className="pointer-events-none absolute bottom-2 right-[11px] z-20 flex items-center gap-0.5 opacity-80">
        <svg width="44" height="42" viewBox="0 0 44 42" aria-hidden="true">
            <defs>
                <linearGradient id="markBlue" x1="0" y1="1" x2="1" y2="0">
                    <stop offset="0" stopColor="#2565b8" />
                    <stop offset="1" stopColor="#6cc4f2" />
                </linearGradient>
                <linearGradient id="markGreen" x1="0" y1="1" x2="1" y2="0">
                    <stop offset="0" stopColor="#d3cf3f" />
                    <stop offset="1" stopColor="#3fb272" />
                </linearGradient>
            </defs>
            <path d="M44 1C26-1 5 7 1 22c-1 6 2 9 8 11-2-9 4-17 14-21 7-3 13-4 21-11z" fill="url(#markBlue)" />
            <path d="M36 3C24 8 14 15 13 22c0 5 6 4 10 5 4 2 0 6-5 8 8-1 13-5 12-9-1-5-10-3-11-7 0-4 8-9 17-16z" fill="url(#markBlue)" />
            <path d="M30 14c8-2 14 1 13 8-2 11-17 17-39 19 15-3 28-9 32-16 3-5 0-9-6-11z" fill="url(#markGreen)" />
        </svg>
        <div>
            <div className="text-[21px] font-bold leading-6 text-[#4187cf]">极光下载站</div>
            <div className="pt-0.5 font-['Liberation_Sans',sans-serif] text-[17px] font-bold leading-4 text-[#4fb768]">www.xz7.com</div>
        </div>
    </div>
);

const App = () => {
    const [menu, setMenu] = useState("开始");

    return (
        <div className="relative flex h-screen w-full flex-col overflow-hidden bg-[#f5f7fa] font-['Noto_Sans','Noto_Sans_CJK_SC',sans-serif] text-xs text-[#20263a]">
            <TitleBar />
            <MenuBar menu={menu} setMenu={setMenu} />
            <Ribbon />

            <main className="flex min-h-0 flex-1">
                <div className="flex min-w-0 flex-1 flex-col">
                    <FormulaBar />
                    <div className="flex min-h-0 flex-1">
                        <Sheet />
                        <VerticalScroll />
                    </div>
                    <SheetTabs />
                </div>
                <SelectionPane />
                <SideBar />
            </main>

            <StatusBar />

            {/* floating things over the workbook */}
            <RedArrow />
            <Thermometer />
            <InputMethodBar />
            <NetSpeed />
            <SiteMark />
        </div>
    );
};

export default App;
